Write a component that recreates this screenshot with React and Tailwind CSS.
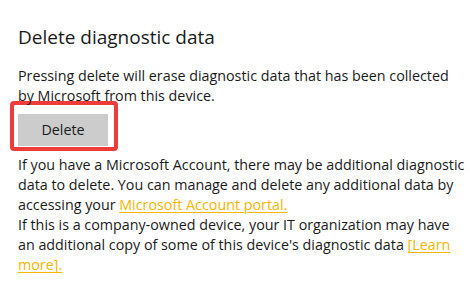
export default function App() {
  const link = 'text-[#f7b500] underline underline-offset-2 decoration-1';
  return (
    <div className="w-[470px] h-[286px] bg-white overflow-hidden pl-[18px] pt-[24px] text-[#1a1a1a] font-['Open_Sans',sans-serif]">
      <h1 className="text-[19px] leading-[26px] font-normal">Delete diagnostic data</h1>
      <p className="mt-[16px] text-[14.3px] leading-[20px] whitespace-nowrap">
        Pressing delete will erase diagnostic data that has been collected
        <br />
        by Microsoft from this device.
      </p>
      <div className="ml-[-8px] mt-[-5px] w-[108px] h-[50px] border-4 border-[#ee3b3b] rounded-[4px] pt-[9px] pl-[4px]">
        <button className="w-[90px] h-[32px] bg-[#cccccc] text-[14.3px] leading-[20px] text-[#1a1a1a]">Delete</button>
      </div>
      <div className="mt-[4px] text-[14.3px] leading-[20px] whitespace-nowrap">
        <p>
          If you have a Microsoft Account, there may be additional diagnostic
          <br />
          data to delete. You can manage and delete any additional data by
          <br />
          accessing your <span className={link}>Microsoft Account portal.</span>
        </p>
        <p>
          If this is a company-owned device, your IT organization may have
          <br />
          an additional copy of some of this device's diagnostic data <span className={link}>[Learn</span>
          <br />
          <span className={link}>more].</span>
        </p>
      </div>
    </div>
  );
}
